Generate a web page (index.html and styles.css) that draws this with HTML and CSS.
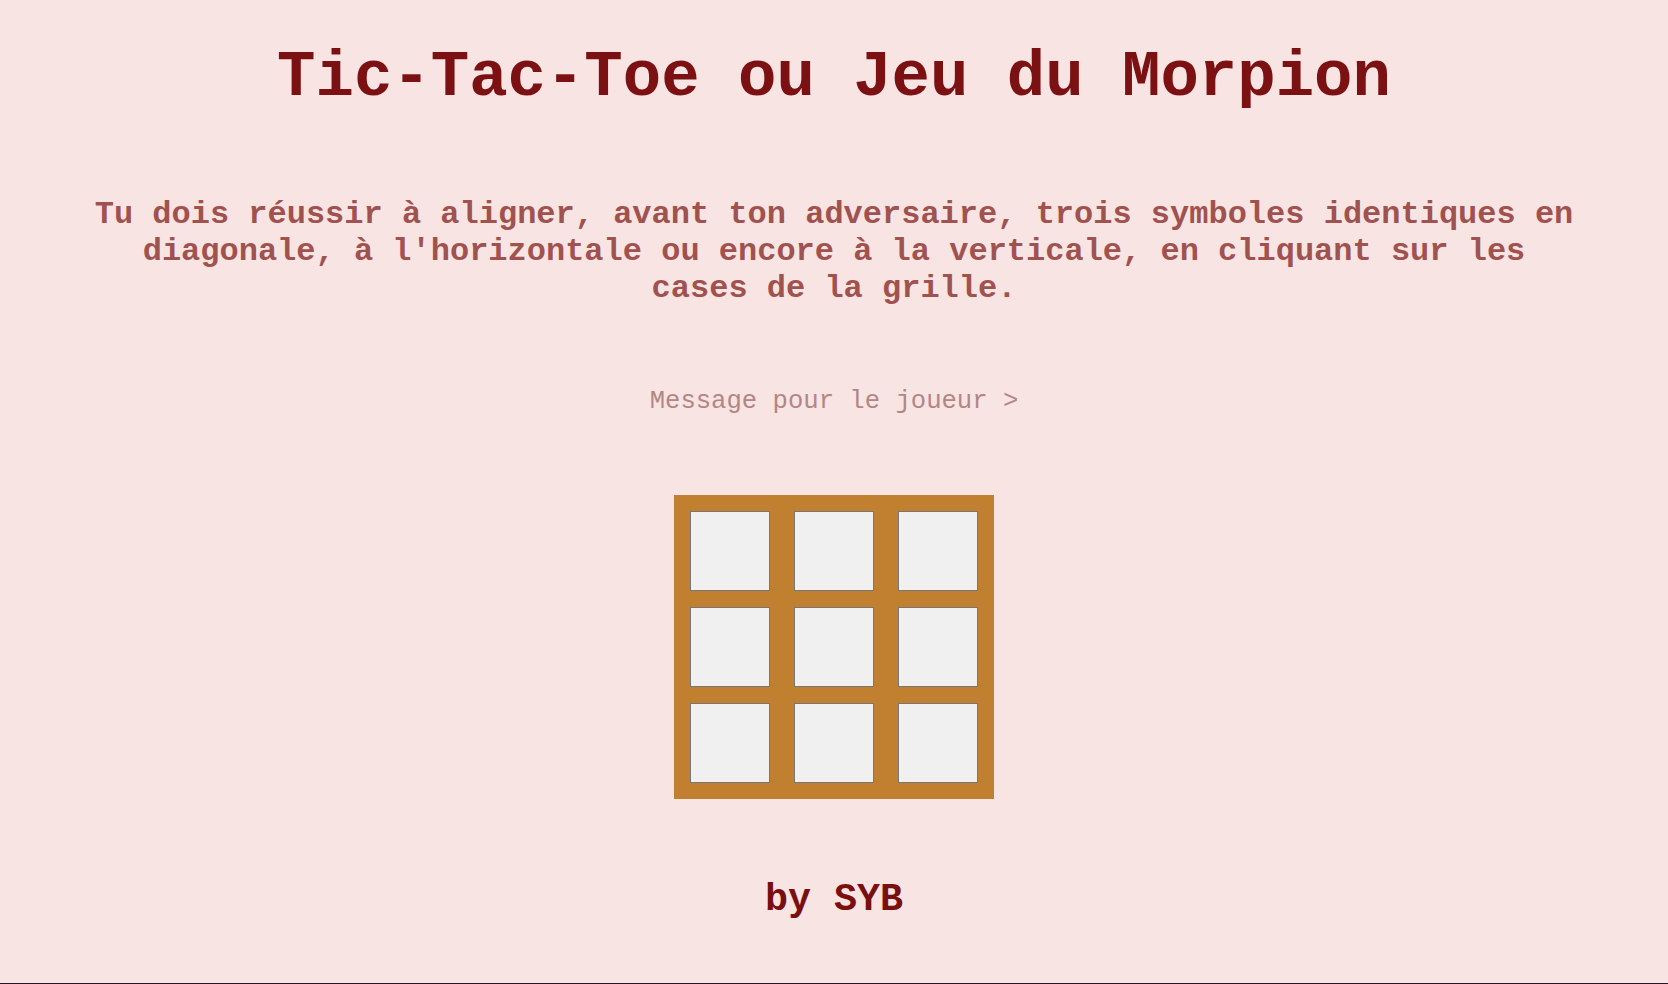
FILE: index.html
```html
<!DOCTYPE html>
<html lang="fr">
<head>
<meta charset="utf-8">
<title>Tic-Tac-Toe ou Jeu du Morpion</title>
<link rel="stylesheet" href="styles.css">
</head>
<body>
<main class="page">
  <h1 class="title">Tic-Tac-Toe ou Jeu du Morpion</h1>
  <p class="rules">Tu dois réussir à aligner, avant ton adversaire, trois symboles identiques en diagonale, à l'horizontale ou encore à la verticale, en cliquant sur les cases de la grille.</p>
  <p class="message">Message pour le joueur &gt;</p>
  <div class="board">
    <div class="cell"></div>
    <div class="cell"></div>
    <div class="cell"></div>
    <div class="cell"></div>
    <div class="cell"></div>
    <div class="cell"></div>
    <div class="cell"></div>
    <div class="cell"></div>
    <div class="cell"></div>
  </div>
  <p class="signature">by SYB</p>
</main>
</body>
</html>
```
FILE: styles.css
```css
html {
  background: #f9e4e4;
  min-height: 100vh;
  box-sizing: border-box;
  border-bottom: 1px solid #2b1326;
}
body {
  margin: 8px;
  font-family: "Liberation Mono", "Courier New", monospace;
}
.page {
  display: flex;
  flex-direction: column;
  align-items: center;
  text-align: center;
}
.title {
  margin: 34px 0 0;
  font-size: 64px;
  line-height: 72px;
  font-weight: bold;
  color: #7b1113;
}
.rules {
  margin: 82px 80px 0;
  font-size: 32px;
  line-height: 37px;
  font-weight: bold;
  color: #a0524f;
}
.message {
  margin: 80px 0 0;
  font-size: 25.6px;
  line-height: 30px;
  color: #b38686;
}
.board {
  margin-top: 78px;
  display: grid;
  grid-template-columns: repeat(3, 80px);
  grid-auto-rows: 80px;
  column-gap: 24px;
  row-gap: 16px;
  padding: 16px;
  background: #c08030;
}
.cell {
  box-sizing: border-box;
  border: 1px solid #777777;
  background: #f0f0f0;
}
.signature {
  margin: 79px 0 0;
  font-size: 38.4px;
  line-height: 44px;
  font-weight: bold;
  color: #7a0f10;
}
```
